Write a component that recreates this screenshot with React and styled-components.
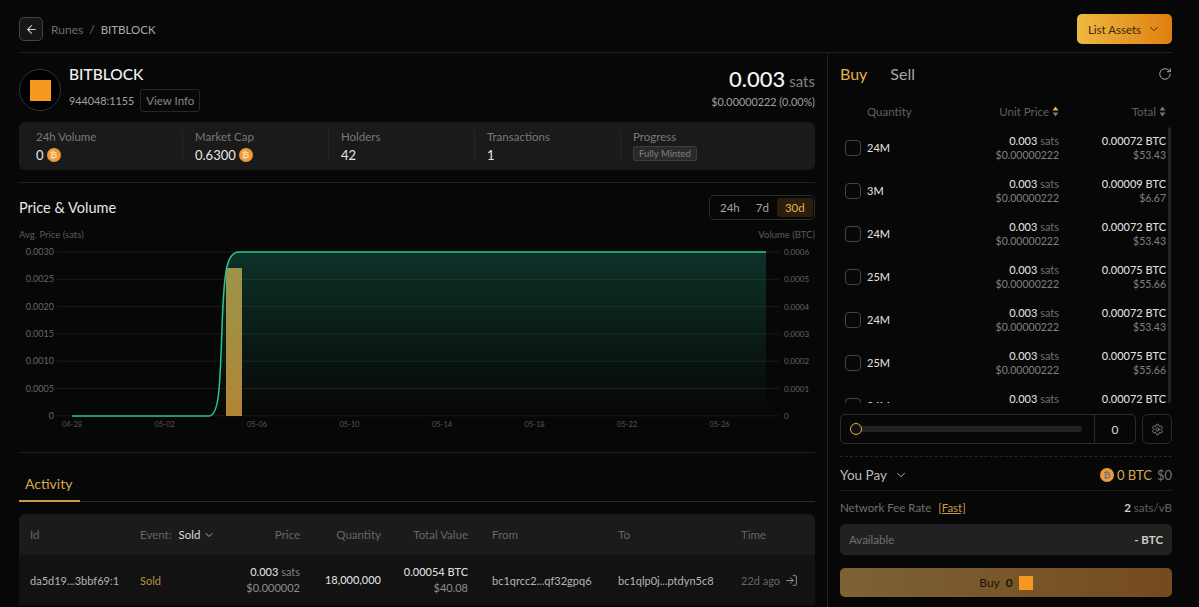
import React from "react";
import styled, { createGlobalStyle } from "styled-components";
import { ArrowLeft, ChevronDown, RotateCw, Settings, LogIn } from "lucide-react";

const GlobalStyle = createGlobalStyle`
html, body { margin: 0; padding: 0; background: #070707; }
* { box-sizing: border-box; }
body { font-family: "Lato", "Open Sans", sans-serif; color: #e8e8e8; }
`;

const Page = styled.div`
width: 1199px;
height: 607px;
overflow: hidden;
padding: 0 27px 0 19px;
background: #070707;
`;
const TopBar = styled.div`
height: 53px;
display: flex;
align-items: center;
justify-content: space-between;
border-bottom: 1px solid #222;
padding-top: 6px;
`;
const Crumbs = styled.div`
display: flex;
align-items: center;
font-size: 12px;
color: #6e6e6e;
gap: 6px;
`;
const BackBtn = styled.div`
width: 24px;
height: 24px;
border: 1px solid #444;
border-radius: 5px;
background: #161616;
display: flex;
align-items: center;
justify-content: center;
color: #ccc;
margin-right: 2px;
`;
const CrumbNow = styled.span`
color: #aaa;
font-size: 11.5px;
`;
const ListBtn = styled.div`
width: 95px;
height: 30px;
border-radius: 5px;
background: linear-gradient(90deg, #edb944, #e07f10);
color: #3a2508;
font-size: 11.5px;
display: flex;
align-items: center;
justify-content: center;
gap: 6px;
`;
const Main = styled.div`
display: flex;
height: 554px;
`;
const LeftCol = styled.div`
width: 809px;
padding-right: 12px;
border-right: 1px solid #222;
flex: none;
`;
const RightCol = styled.div`
flex: 1;
padding-left: 12px;
min-width: 0;
`;
const TokenRow = styled.div`
height: 69px;
display: flex;
align-items: flex-start;
justify-content: space-between;
padding-top: 11px;
`;
const TokenInfo = styled.div`
display: flex;
gap: 8px;
align-items: flex-start;
`;
const TokenLogo = styled.div`
width: 42px;
height: 42px;
margin-top: 5px;
border-radius: 50%;
border: 1px solid #333;
background: #000;
display: flex;
align-items: center;
justify-content: center;
`;
const OrangeSquare = styled.div`
width: ${({ size }) => size}px;
height: ${({ size }) => size}px;
background: #f7981f;
`;
const TokenName = styled.div`
font-size: 15.5px;
font-weight: 500;
color: #f2f2f2;
line-height: 20px;
`;
const TokenSub = styled.div`
display: flex;
align-items: center;
gap: 6px;
font-size: 10.8px;
color: #a0a0a0;
margin-top: 5px;
`;
const InfoBtn = styled.div`
height: 23px;
width: 60px;
justify-content: center;
border: 1px solid #262626;
border-radius: 3px;
display: flex;
align-items: center;
color: #888;
font-size: 11.5px;
`;
const PriceBox = styled.div`
text-align: right;
padding-top: 2px;
`;
const PriceBig = styled.div`
font-size: 22px;
font-weight: 500;
line-height: 26px;
color: #f5f5f5;
span {
  font-size: 15px;
  font-weight: 400;
  color: #808080;
  margin-left: 4px;
}
`;
const PriceUsd = styled.div`
font-size: 10.8px;
color: #a0a0a0;
margin-top: 1px;
`;
const StatsBar = styled.div`
height: 48px;
background: #1a1a1a;
border-radius: 6px;
display: grid;
grid-template-columns: 164px repeat(4, 146px);
align-items: center;
`;
const Stat = styled.div`
height: 32px;
padding-left: ${({ first }) => (first ? 17 : 12)}px;
border-right: ${({ last }) => (last ? "none" : "1px solid #262626")};
`;
const StatLabel = styled.div`
font-size: 11.5px;
color: #787878;
line-height: 14px;
`;
const StatValue = styled.div`
font-size: 13px;
color: #e6e6e6;
line-height: 18px;
margin-top: 2px;
display: flex;
align-items: center;
gap: 3px;
`;
const Tag = styled.span`
font-size: 9.5px;
color: #808080;
background: #2a2a2a;
border: 1px solid #3c3c3c;
border-radius: 2px;
padding: 0 5px;
line-height: 13px;
`;
const Btc = styled.span`
width: ${({ size }) => size || 14}px;
height: ${({ size }) => size || 14}px;
border-radius: 50%;
background: #ef9a38;
color: #f9d9b0;
font-family: "DejaVu Sans", sans-serif;
font-size: ${({ size }) => (size || 14) - 5}px;
font-weight: 700;
display: inline-flex;
align-items: center;
justify-content: center;
flex: none;
`;
const ChartSection = styled.div`
margin-top: 12px;
border-top: 1px solid #222;
height: 271px;
border-bottom: 1px solid #222;
`;
const ChartHead = styled.div`
display: flex;
justify-content: space-between;
align-items: center;
margin-top: 12px;
height: 25px;
`;
const ChartTitle = styled.div`
font-size: 14.5px;
color: #e8e8e8;
`;
const Range = styled.div`
width: 106px;
height: 25px;
border: 1px solid #2c2c2c;
border-radius: 5px;
display: flex;
align-items: center;
justify-content: space-around;
padding: 0 2px;
font-size: 11.5px;
`;
const RangeItem = styled.span`
padding: 3px 8px;
border-radius: 3px;
color: ${({ active }) => (active ? "#e3b04b" : "#a5a5a5")};
background: ${({ active }) => (active ? "#2b1e0c" : "transparent")};
`;
const ChartSvg = styled.svg`
display: block;
margin-top: 8px;
font-family: "Lato", sans-serif;
`;
const ActivityTabs = styled.div`
height: 49px;
border-bottom: 1px solid #2a2a2a;
display: flex;
align-items: flex-end;
`;
const ActivityTab = styled.div`
width: 61px;
height: 100%;
padding-left: 6px;
padding-top: 21px;
font-size: 14px;
color: #d7a94f;
border-bottom: 2px solid #c99a45;
margin-bottom: -1px;
`;
const Table = styled.div`
margin-top: 12px;
background: #121212;
border-radius: 6px 6px 0 0;
overflow: hidden;
`;
const Cols = styled.div`
display: grid;
grid-template-columns: 110px 80px 80px 81px 87px 150px 123px 1fr;
padding: 0 11px;
align-items: center;
`;
const HeadRow = styled(Cols)`
height: 41px;
background: #1b1b1b;
font-size: 11.5px;
color: #666;
`;
const BodyRow = styled(Cols)`
height: 50px;
font-size: 11px;
color: #b5b5b5;
`;
const Cell = styled.div`
text-align: ${({ right }) => (right ? "right" : "left")};
padding-left: ${({ pad }) => pad || 0}px;
white-space: nowrap;
`;
const EventCell = styled.div`
display: flex;
align-items: center;
gap: 7px;
white-space: nowrap;
`;
const EventValue = styled.span`
color: #ddd;
display: inline-flex;
align-items: center;
gap: 3px;
`;
const Sold = styled.div`
color: #b8903f;
`;
const CellMain = styled.div`
color: #ddd;
font-weight: 500;
font-size: 11px;
line-height: 16px;
span {
  font-weight: 400;
  color: #808080;
}
`;
const CellSub = styled.div`
color: #8e8e8e;
font-size: 11px;
line-height: 16px;
`;
const TimeCell = styled.div`
color: #666;
display: flex;
align-items: center;
gap: 5px;
white-space: nowrap;
svg { color: #aaa; }
`;
const SideTabs = styled.div`
height: 43px;
display: flex;
align-items: center;
gap: 23px;
font-size: 16px;
padding-bottom: 2px;
`;
const SideTab = styled.span`
color: ${({ active }) => (active ? "#e3b04b" : "#a5a5a5")};
`;
const Refresh = styled.div`
margin-left: auto;
color: #bbb;
display: flex;
`;
const BookHead = styled.div`
display: grid;
grid-template-columns: 27px 1fr 100px 107px;
height: 30px;
align-items: center;
font-size: 11.5px;
color: #606060;
padding-right: 6px;
`;
const HeadCell = styled.div`
grid-column: ${({ col }) => col};
display: flex;
align-items: center;
justify-content: ${({ right }) => (right ? "flex-end" : "flex-start")};
gap: 3px;
`;
const SortIcon = styled.svg`
flex: none;
`;
const BookList = styled.div`
height: 277px;
overflow: hidden;
position: relative;
padding-right: 6px;
`;
const BookScroll = styled.div`
position: absolute;
top: 1px;
right: 1px;
width: 3px;
height: 276px;
background: #222;
border-radius: 2px;
`;
const BookRow = styled.div`
display: grid;
grid-template-columns: 27px 1fr 100px 107px;
height: 43px;
align-items: center;
`;
const Check = styled.div`
width: 16px;
height: 16px;
margin-left: 5px;
border: 1px solid #444;
border-radius: 4px;
`;
const Qty = styled.div`
font-size: 11px;
font-weight: 500;
color: #ddd;
`;
const Num = styled.div`
text-align: right;
font-size: 11px;
line-height: 14px;
`;
const NumMain = styled.div`
color: #ddd;
font-weight: 500;
span { color: #707070; font-weight: 400; }
`;
const NumSub = styled.div`
color: #808080;
font-size: 10.5px;
`;
const SliderRow = styled.div`
display: flex;
gap: 6px;
margin-top: 11px;
`;
const SliderBox = styled.div`
flex: 1;
height: 30px;
border: 1px solid #2c2c2c;
border-radius: 5px;
display: flex;
align-items: center;
padding-left: 9px;
`;
const Track = styled.div`
width: 232px;
height: 6px;
background: #222;
border-radius: 3px;
position: relative;
`;
const Thumb = styled.div`
position: absolute;
left: 0;
top: -3px;
width: 12px;
height: 12px;
border-radius: 50%;
border: 1.5px solid #e3b04b;
background: #111;
`;
const SliderValue = styled.div`
margin-left: auto;
width: 41px;
height: 100%;
border-left: 1px solid #2c2c2c;
display: flex;
align-items: center;
justify-content: center;
font-size: 12px;
color: #ddd;
`;
const GearBtn = styled.div`
width: 30px;
height: 30px;
border: 1px solid #2c2c2c;
border-radius: 6px;
color: #999;
display: flex;
align-items: center;
justify-content: center;
`;
const PayRow = styled.div`
margin-top: 12px;
height: 35px;
padding-top: 2px;
border-top: 1px dashed #262626;
border-bottom: 1px solid #1c1c1c;
display: flex;
align-items: center;
justify-content: space-between;
font-size: 13.5px;
color: #bbb;
`;
const PayLabel = styled.div`
display: flex;
align-items: center;
gap: 7px;
`;
const PayAmount = styled.div`
display: flex;
align-items: center;
gap: 3px;
color: #d7a94f;
font-size: 13px;
span { color: #777; margin-left: 2px; }
`;
const FeeRow = styled.div`
height: 33px;
display: flex;
align-items: center;
justify-content: space-between;
font-size: 11.5px;
color: #707070;
`;
const FeeFast = styled.span`
color: #c99a45;
text-decoration: underline;
margin-left: 4px;
`;
const FeeValue = styled.div`
color: #606060;
b { color: #ccc; }
`;
const Available = styled.div`
height: 31px;
background: #212121;
border-radius: 5px;
padding: 0 9px;
display: flex;
align-items: center;
justify-content: space-between;
font-size: 11.5px;
color: #707070;
b { color: #ccc; }
`;
const BuyBtn = styled.div`
margin-top: 13px;
height: 29px;
border-radius: 5px;
background: linear-gradient(90deg, #7d6334, #744a1e);
display: flex;
align-items: center;
justify-content: center;
gap: 6px;
font-size: 12px;
color: #1d1408;
b { font-weight: 700; }
`;

const book = [
  ["24M", "0.00072", "$53.43"],
  ["3M", "0.00009", "$6.67"],
  ["24M", "0.00072", "$53.43"],
  ["25M", "0.00075", "$55.66"],
  ["24M", "0.00072", "$53.43"],
  ["25M", "0.00075", "$55.66"],
  ["24M", "0.00072", "$53.43"],
];
const stats = [
  ["24h Volume", "0", true],
  ["Market Cap", "0.6300", true],
  ["Holders", "42"],
  ["Transactions", "1"],
];
const leftTicks = ["0.0030", "0.0025", "0.0020", "0.0015", "0.0010", "0.0005", "0"];
const rightTicks = ["0.0006", "0.0005", "0.0004", "0.0003", "0.0002", "0.0001", "0"];
const dates = ["04-28", "05-02", "05-06", "05-10", "05-14", "05-18", "05-22", "05-26"];

const Sort = ({ up }) => (
  <SortIcon width="7" height="11" viewBox="0 0 7 11">
    <path d="M3.5 0.5 L6.5 4.5 H0.5 Z" fill={up ? "#e3b04b" : "#777"} />
    <path d="M3.5 10.5 L6.5 6.5 H0.5 Z" fill="#777" />
  </SortIcon>
);

// y coords are relative to the svg top (page y 228)
const Chart = () => (
  <ChartSvg width="796" height="202" viewBox="0 0 796 202">
    <defs>
      <linearGradient id="area" x1="0" y1="0" x2="0" y2="1">
        <stop offset="0" stopColor="#1fb58f" stopOpacity="0.24" />
        <stop offset="1" stopColor="#1fb58f" stopOpacity="0" />
      </linearGradient>
      <linearGradient id="bar" x1="0" y1="0" x2="0" y2="1">
        <stop offset="0" stopColor="#9c9448" />
        <stop offset="1" stopColor="#b18534" />
      </linearGradient>
    </defs>
    <text x="0" y="10" fontSize="9.5" fill="#5c5c5c">Avg. Price (sats)</text>
    <text x="796" y="10" fontSize="9.5" fill="#5c5c5c" textAnchor="end">Volume (BTC)</text>
    {leftTicks.map((t, i) => (
      <g key={t}>
        <line x1="38" x2="760" y1={24 + i * 27.3} y2={24 + i * 27.3} stroke="#1b1b1b" />
        <text x="35" y={27 + i * 27.3} fontSize="9" fill="#666" textAnchor="end">{t}</text>
        <text x="765" y={27 + i * 27.3} fontSize="8" fill="#666">{rightTicks[i]}</text>
      </g>
    ))}
    {dates.map((d, i) => (
      <text key={d} x={53 + i * 92.5} y="199" fontSize="7.5" fill="#555" textAnchor="middle">{d}</text>
    ))}
    <path d="M53 188 H190 C200 188 201 160 203 100 C205 40 208 24 220 24 H747 V188 Z" fill="url(#area)" />
    <rect x="207" y="40" width="16" height="148" fill="url(#bar)" />
    <path d="M53 188 H190 C200 188 201 160 203 100 C205 40 208 24 220 24 H747" fill="none" stroke="#28c49c" strokeWidth="1.5" />
  </ChartSvg>
);

export default function App() {
  return (
    <Page>
      <GlobalStyle />
      <TopBar>
        <Crumbs>
          <BackBtn><ArrowLeft size={13} /></BackBtn>
          <span>Runes</span>
          <span>/</span>
          <CrumbNow>BITBLOCK</CrumbNow>
        </Crumbs>
        <ListBtn>List Assets <ChevronDown size={14} strokeWidth={1.5} /></ListBtn>
      </TopBar>
      <Main>
        <LeftCol>
          <TokenRow>
            <TokenInfo>
              <TokenLogo><OrangeSquare size={21} /></TokenLogo>
              <div>
                <TokenName>BITBLOCK</TokenName>
                <TokenSub>
                  944048:1155
                  <InfoBtn>View Info</InfoBtn>
                </TokenSub>
              </div>
            </TokenInfo>
            <PriceBox>
              <PriceBig>0.003<span>sats</span></PriceBig>
              <PriceUsd>$0.00000222 (0.00%)</PriceUsd>
            </PriceBox>
          </TokenRow>
          <StatsBar>
            {stats.map(([label, value, coin], i) => (
              <Stat key={label} first={i === 0}>
                <StatLabel>{label}</StatLabel>
                <StatValue>{value}{coin && <Btc>₿</Btc>}</StatValue>
              </Stat>
            ))}
            <Stat last>
              <StatLabel>Progress</StatLabel>
              <StatValue><Tag>Fully Minted</Tag></StatValue>
            </Stat>
          </StatsBar>
          <ChartSection>
            <ChartHead>
              <ChartTitle>Price &amp; Volume</ChartTitle>
              <Range>
                <RangeItem>24h</RangeItem>
                <RangeItem>7d</RangeItem>
                <RangeItem active>30d</RangeItem>
              </Range>
            </ChartHead>
            <Chart />
          </ChartSection>
          <ActivityTabs>
            <ActivityTab>Activity</ActivityTab>
          </ActivityTabs>
          <Table>
            <HeadRow>
              <Cell>Id</Cell>
              <EventCell>Event: <EventValue>Sold <ChevronDown size={12} strokeWidth={1.5} /></EventValue></EventCell>
              <Cell right>Price</Cell>
              <Cell right>Quantity</Cell>
              <Cell right>Total Value</Cell>
              <Cell pad={24}>From</Cell>
              <Cell>To</Cell>
              <Cell>Time</Cell>
            </HeadRow>
            <BodyRow>
              <Cell>da5d19...3bbf69:1</Cell>
              <Sold>Sold</Sold>
              <Cell right>
                <CellMain>0.003 <span>sats</span></CellMain>
                <CellSub>$0.000002</CellSub>
              </Cell>
              <Cell right><CellMain>18,000,000</CellMain></Cell>
              <Cell right>
                <CellMain>0.00054 BTC</CellMain>
                <CellSub>$40.08</CellSub>
              </Cell>
              <Cell pad={24}>bc1qrcc2...qf32gpq6</Cell>
              <Cell>bc1qlp0j...ptdyn5c8</Cell>
              <TimeCell>22d ago <LogIn size={13} strokeWidth={1.5} /></TimeCell>
            </BodyRow>
          </Table>
        </LeftCol>
        <RightCol>
          <SideTabs>
            <SideTab active>Buy</SideTab>
            <SideTab>Sell</SideTab>
            <Refresh><RotateCw size={14} strokeWidth={1.5} /></Refresh>
          </SideTabs>
          <BookHead>
            <HeadCell col={2}>Quantity</HeadCell>
            <HeadCell col={3} right>Unit Price <Sort up /></HeadCell>
            <HeadCell col={4} right>Total <Sort /></HeadCell>
          </BookHead>
          <BookList>
            {book.map(([qty, btc, usd], i) => (
              <BookRow key={i}>
                <Check />
                <Qty>{qty}</Qty>
                <Num>
                  <NumMain>0.003 <span>sats</span></NumMain>
                  <NumSub>$0.00000222</NumSub>
                </Num>
                <Num>
                  <NumMain>{btc} BTC</NumMain>
                  <NumSub>{usd}</NumSub>
                </Num>
              </BookRow>
            ))}
            <BookScroll />
          </BookList>
          <SliderRow>
            <SliderBox>
              <Track><Thumb /></Track>
              <SliderValue>0</SliderValue>
            </SliderBox>
            <GearBtn><Settings size={13} strokeWidth={1.5} /></GearBtn>
          </SliderRow>
          <PayRow>
            <PayLabel>You Pay <ChevronDown size={14} strokeWidth={1.5} /></PayLabel>
            <PayAmount><Btc>₿</Btc>0 BTC <span>$0</span></PayAmount>
          </PayRow>
          <FeeRow>
            <div>Network Fee Rate <FeeFast>[Fast]</FeeFast></div>
            <FeeValue><b>2</b> sats/vB</FeeValue>
          </FeeRow>
          <Available>Available <b>- BTC</b></Available>
          <BuyBtn>Buy <b>0</b> <OrangeSquare size={14} /></BuyBtn>
        </RightCol>
      </Main>
    </Page>
  );
}
